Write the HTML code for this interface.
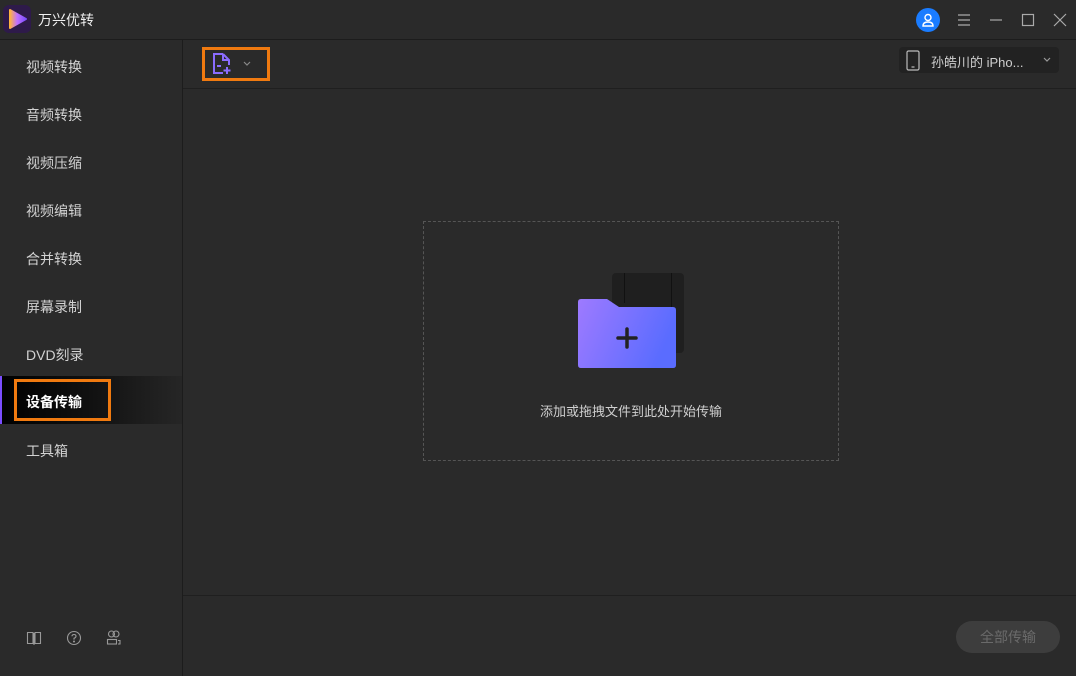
<!DOCTYPE html>
<html><head><meta charset="utf-8"><style>
*{margin:0;padding:0;box-sizing:border-box}
body{width:1076px;height:676px;background:#2a2a2a;font-family:"Liberation Sans","Noto Sans CJK SC",sans-serif;color:#d0d0d0;position:relative;overflow:hidden}
.abs{position:absolute}
.nav{position:absolute;left:26px;font-size:14px;color:#d2d2d2}
</style></head><body>
<div class="abs" style="left:0;top:39px;width:1076px;height:1px;background:#1c1c1c"></div>
<div class="abs" style="left:3px;top:5px;width:28px;height:28px;border-radius:6px;background:#2e1a4a"></div>
<svg class="abs" style="left:3px;top:5px" width="28" height="28"><defs><linearGradient id="lg" x1="0" y1="0" x2="1" y2="0"><stop offset="0" stop-color="#ffb340"/><stop offset="0.45" stop-color="#c070ff"/><stop offset="1" stop-color="#7b4dff"/></linearGradient></defs><path d="M7 5 L23 14 L7 23 Z" fill="url(#lg)" stroke="url(#lg)" stroke-width="2" stroke-linejoin="round"/></svg>
<div class="abs" style="left:38px;top:10px;font-size:14px;color:#f0f0f0">万兴优转</div>
<div class="abs" style="left:916px;top:8px;width:24px;height:24px;border-radius:50%;background:#1a7cff"></div>
<svg class="abs" style="left:916px;top:8px" width="24" height="24" fill="none" stroke="#fff" stroke-width="1.4"><circle cx="12" cy="9.5" r="3"/><path d="M7 18 Q7 14 12 14 Q17 14 17 18 Z"/></svg>
<svg class="abs" style="left:956px;top:12px" width="16" height="16" stroke="#aaa" stroke-width="1.2"><path d="M2 3H14M2 8H14M2 13H14"/></svg>
<svg class="abs" style="left:988px;top:12px" width="16" height="16" stroke="#aaa" stroke-width="1.2"><path d="M2 8H14"/></svg>
<svg class="abs" style="left:1020px;top:12px" width="16" height="16" fill="none" stroke="#aaa" stroke-width="1.2"><rect x="2.5" y="2.5" width="11" height="11"/></svg>
<svg class="abs" style="left:1052px;top:12px" width="16" height="16" stroke="#aaa" stroke-width="1.2"><path d="M2 2L14 14M14 2L2 14"/></svg>
<div class="abs" style="left:182px;top:40px;width:1px;height:636px;background:#1c1c1c"></div>
<div class="nav" style="top:57px">视频转换</div>
<div class="nav" style="top:105px">音频转换</div>
<div class="nav" style="top:153px">视频压缩</div>
<div class="nav" style="top:201px">视频编辑</div>
<div class="nav" style="top:249px">合并转换</div>
<div class="nav" style="top:297px">屏幕录制</div>
<div class="nav" style="top:345px">DVD刻录</div>
<div class="abs" style="left:0;top:376px;width:182px;height:48px;background:linear-gradient(90deg,#000 0%,#111 50%,#262626 100%)"></div>
<div class="abs" style="left:0;top:376px;width:2px;height:48px;background:#7b4dff"></div>
<div class="abs" style="left:14px;top:379px;width:97px;height:42px;border:3px solid #f07a10"></div>
<div class="nav" style="top:392px;color:#fff;font-weight:bold">设备传输</div>
<div class="nav" style="top:441px">工具箱</div>
<svg class="abs" style="left:26px;top:630px" width="16" height="16" fill="none" stroke="#999" stroke-width="1.1"><path d="M1.5 2.5H7V13.5H1.5Z M9 2.5H14.5V13.5H9Z M8 3V15"/></svg>
<svg class="abs" style="left:66px;top:630px" width="16" height="16" fill="none" stroke="#999" stroke-width="1.1"><circle cx="8" cy="8" r="6.5"/><path d="M6 6.3Q6 4.5 8 4.5Q10 4.5 10 6.2Q10 7.5 8 8.3V9.6"/><circle cx="8" cy="11.5" r="0.5" fill="#999"/></svg>
<svg class="abs" style="left:106px;top:630px" width="16" height="16" fill="none" stroke="#999" stroke-width="1.1"><circle cx="5.5" cy="4" r="3"/><circle cx="10" cy="4" r="3"/><rect x="1.5" y="9.5" width="9" height="4.5"/><path d="M12 10.5H14V14H12"/></svg>
<div class="abs" style="left:183px;top:88px;width:893px;height:1px;background:#1f1f1f"></div>
<div class="abs" style="left:202px;top:47px;width:68px;height:34px;border:3px solid #f07a10"></div>
<svg class="abs" style="left:211px;top:52px" width="22" height="24" fill="none" stroke="#8b6cff" stroke-width="2"><path d="M12 2H3V21H12M12 2L18 8V13M12 2V8H18"/><path d="M6 14H10M16 15V22M12.5 18.5H19.5"/></svg>
<svg class="abs" style="left:242px;top:60px" width="10" height="8" fill="none" stroke="#888" stroke-width="1.2"><path d="M2 2L5 5L8 2"/></svg>
<div class="abs" style="left:899px;top:47px;width:160px;height:26px;background:#222;border-radius:4px"></div>
<svg class="abs" style="left:905px;top:50px" width="16" height="21" fill="none" stroke="#bbb" stroke-width="1.2"><rect x="2" y="1" width="12" height="19" rx="1.5"/><path d="M6.5 17H9.5"/></svg>
<div class="abs" style="left:931px;top:52px;font-size:13px;color:#cfcfcf">孙皓川的 iPho...</div>
<svg class="abs" style="left:1042px;top:56px" width="10" height="8" fill="none" stroke="#999" stroke-width="1.2"><path d="M2 2L5 5L8 2"/></svg>
<div class="abs" style="left:423px;top:221px;width:416px;height:240px;border:1px dashed #555"></div>
<div class="abs" style="left:612px;top:273px;width:72px;height:80px;background:#1f1f1f;border-radius:4px"></div>
<div class="abs" style="left:624px;top:273px;width:1px;height:30px;background:#111"></div>
<div class="abs" style="left:671px;top:273px;width:1px;height:80px;background:#111"></div>
<svg class="abs" style="left:577px;top:298px" width="100" height="72"><defs><linearGradient id="fg" x1="0" y1="0" x2="1" y2="0.3"><stop offset="0" stop-color="#9e7aff"/><stop offset="1" stop-color="#5a6cff"/></linearGradient></defs><path d="M4 1H30L42 9H96Q99 9 99 12V67Q99 70 96 70H4Q1 70 1 67V4Q1 1 4 1Z" fill="url(#fg)"/><path d="M50 31V49M41 40H59" stroke="#222" stroke-width="3.5" stroke-linecap="round"/></svg>
<div class="abs" style="left:423px;top:401px;width:416px;text-align:center;font-size:13px;color:#cfcfcf">添加或拖拽文件到此处开始传输</div>
<div class="abs" style="left:183px;top:595px;width:893px;height:1px;background:#1f1f1f"></div>
<div class="abs" style="left:956px;top:621px;width:104px;height:32px;border-radius:16px;background:#3d3d3d;color:#6a6a6a;font-size:14px;text-align:center;line-height:32px">全部传输</div>
</body></html>
